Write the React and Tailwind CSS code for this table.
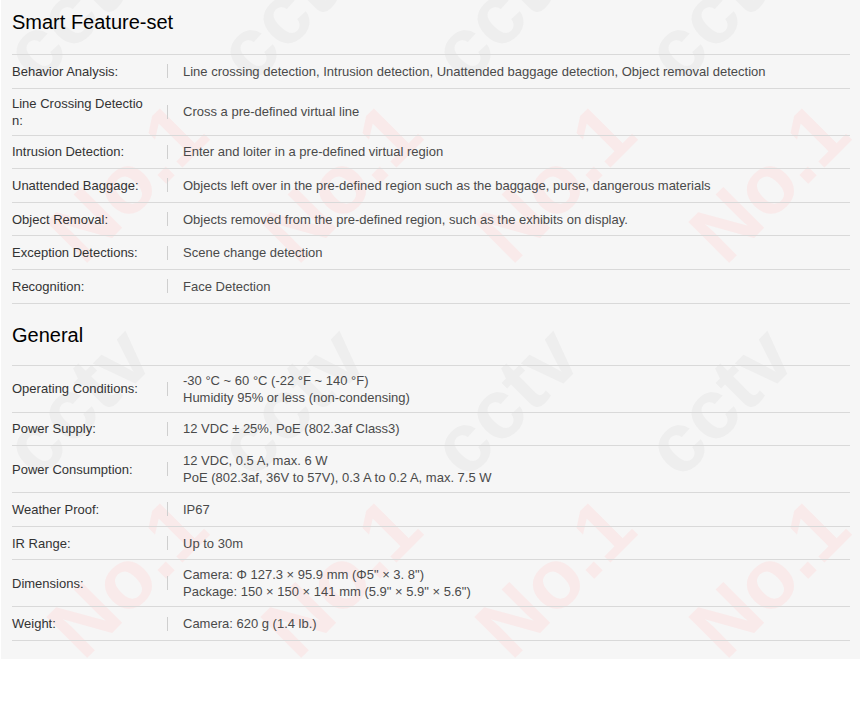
import React from "react";

const smart = [
  ["Behavior Analysis:", ["Line crossing detection, Intrusion detection, Unattended baggage detection, Object removal detection"]],
  ["Line Crossing Detection:", ["Cross a pre-defined virtual line"]],
  ["Intrusion Detection:", ["Enter and loiter in a pre-defined virtual region"]],
  ["Unattended Baggage:", ["Objects left over in the pre-defined region such as the baggage, purse, dangerous materials"]],
  ["Object Removal:", ["Objects removed from the pre-defined region, such as the exhibits on display."]],
  ["Exception Detections:", ["Scene change detection"]],
  ["Recognition:", ["Face Detection"]],
];

const general = [
  ["Operating Conditions:", ["-30 °C ~ 60 °C (-22 °F ~ 140 °F)", "Humidity 95% or less (non-condensing)"]],
  ["Power Supply:", ["12 VDC ± 25%, PoE (802.3af Class3)"]],
  ["Power Consumption:", ["12 VDC, 0.5 A, max. 6 W", "PoE (802.3af, 36V to 57V), 0.3 A to 0.2 A, max. 7.5 W"]],
  ["Weather Proof:", ["IP67"]],
  ["IR Range:", ["Up to 30m"]],
  ["Dimensions:", ["Camera: Φ 127.3 × 95.9 mm (Φ5\" × 3. 8\")", "Package: 150 × 150 × 141 mm (5.9\" × 5.9\" × 5.6\")"]],
  ["Weight:", ["Camera: 620 g (1.4 lb.)"]],
];

function Table({ rows }) {
  return (
    <div className="border-t border-[#d9d9d9]">
      {rows.map(([label, vals]) => (
        <div
          key={label}
          className="flex items-center min-h-[33.6px] py-[6px] border-b border-[#d9d9d9] text-[13px] leading-[17px]"
        >
          <div className="w-[155px] pr-[21px] shrink-0 break-all text-[#333333]">{label}</div>
          <div className="w-px h-[14px] bg-[#cfcfcf] shrink-0" />
          <div className="ml-[15px] text-[#4a4a4a]">
            {vals.map((v) => (
              <div key={v}>{v}</div>
            ))}
          </div>
        </div>
      ))}
    </div>
  );
}

function Watermark() {
  const items = [];
  for (let j = -1; j < 3; j++) {
    for (let i = -1; i < 6; i++) {
      items.push(
        <span
          key={`r${i}_${j}`}
          className="absolute -translate-x-1/2 -translate-y-1/2 -rotate-45 text-[84px] leading-none font-black text-[#f9eaea] whitespace-nowrap"
          style={{ left: 126 + 214 * i, top: 182 + 395 * j }}
        >
          No.1
        </span>
      );
      items.push(
        <span
          key={`g${i}_${j}`}
          className="absolute -translate-x-1/2 -translate-y-1/2 -rotate-45 text-[84px] leading-none font-black text-[#eeeeee] whitespace-nowrap"
          style={{ left: 76 + 214 * i, top: 6 + 395 * j }}
        >
          cctv
        </span>
      );
    }
  }
  return (
    <div aria-hidden="true" className="absolute inset-0 pointer-events-none select-none">
      {items}
    </div>
  );
}

export default function App() {
  return (
    <div className="w-[860px] h-[720px] bg-white" style={{ fontFamily: '"Liberation Sans", Arial, sans-serif' }}>
      <div className="relative ml-px w-[859px] bg-[#f6f6f6] overflow-hidden pl-[11px] pr-[10px] pb-[18px]">
        <Watermark />
        <div className="relative">
          <h2 className="pt-[11px] pb-[21px] text-[20px] leading-[22px] text-black font-normal">Smart Feature-set</h2>
          <Table rows={smart} />
          <h2 className="pt-[20px] pb-[19px] text-[20px] leading-[22px] text-black font-normal">General</h2>
          <Table rows={general} />
        </div>
      </div>
    </div>
  );
}
